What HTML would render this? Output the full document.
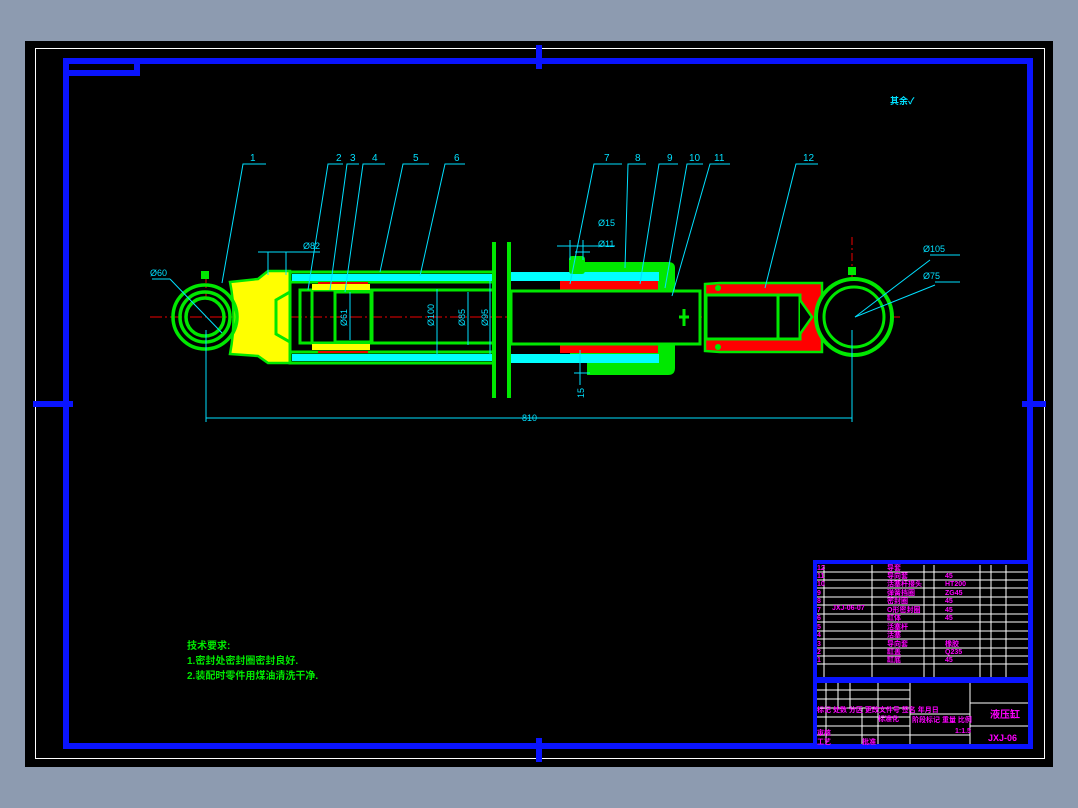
<!DOCTYPE html>
<html><head><meta charset="utf-8"><style>
html,body{margin:0;padding:0;background:#8d9bb0;width:1078px;height:808px;overflow:hidden}
svg{display:block}
text{font-family:"Liberation Sans","Noto Sans CJK SC",sans-serif}
</style></head><body>
<svg width="1078" height="808" viewBox="0 0 1078 808" xmlns="http://www.w3.org/2000/svg">
<rect x="0" y="0" width="1078" height="808" fill="#8d9bb0"/>
<rect x="25" y="41" width="1028" height="726" fill="#000"/>
<rect x="35.5" y="48.5" width="1009" height="710" fill="none" stroke="#fff" stroke-width="1"/>
<g stroke="#0a14ff" fill="none" stroke-width="6">
<rect x="66" y="61" width="964" height="685"/>
<polyline points="66,73 137,73 137,61"/>
</g>
<g fill="#0a14ff">
<rect x="536" y="45" width="6" height="24"/><rect x="536" y="738" width="6" height="24"/>
<rect x="33" y="401" width="40" height="6"/><rect x="1022" y="401" width="24" height="6"/>
</g>
<text x="890" y="104" fill="#00e0ff" font-size="9" font-weight="bold">其余✓</text>

<line x1="150" y1="317" x2="900" y2="317" stroke="#e00" stroke-width="1" stroke-dasharray="12,3,2,3"/>
<line x1="206" y1="275" x2="206" y2="300" stroke="#e00" stroke-dasharray="8,3,2,3"/>
<line x1="852" y1="237" x2="852" y2="280" stroke="#e00" stroke-dasharray="8,3,2,3"/>

<path d="M230,282 L258,279 L268,271 L290,271 L290,363 L268,363 L258,356 L230,354 Q237,317 230,282 Z" fill="#ffff00" stroke="#00e800" stroke-width="2.5"/>
<g fill="none" stroke="#00e800" stroke-width="3.5">
<circle cx="205" cy="317" r="32"/><circle cx="205" cy="317" r="25"/><circle cx="205" cy="317" r="19"/>
</g>
<rect x="201" y="271" width="8" height="8" fill="#00e800"/>
<g fill="none" stroke="#00e800" stroke-width="3">
<rect x="290" y="272" width="204" height="91"/>
<line x1="372" y1="290" x2="494" y2="290"/><line x1="372" y1="343" x2="494" y2="343"/>
<line x1="290" y1="282" x2="494" y2="282"/><line x1="290" y1="352" x2="494" y2="352"/>
<rect x="300" y="290" width="72" height="53"/>
<rect x="335" y="292" width="36" height="50"/>
<line x1="312" y1="290" x2="312" y2="343"/>
<path d="M276,300 L290,292 L290,342 L276,334 Z"/>
</g>
<rect x="292" y="274" width="200" height="7" fill="#00ffff"/>
<rect x="292" y="354" width="200" height="7" fill="#00ffff"/>
<rect x="312" y="284" width="58" height="6" fill="#ffff00"/>
<rect x="312" y="344" width="58" height="6" fill="#ffff00"/>
<rect x="318" y="282" width="50" height="2" fill="#e00"/><rect x="318" y="351" width="50" height="2" fill="#e00"/>
<rect x="492" y="242" width="4" height="156" fill="#00e800"/>
<rect x="507" y="242" width="4" height="156" fill="#00e800"/>
<path d="M570,262 L668,262 Q675,262 675,268 L675,368 Q675,375 668,375 L587,375 L587,354 L570,354 Z" fill="#00e800"/>
<rect x="511" y="272" width="148" height="9" fill="#00ffff"/>
<rect x="511" y="354" width="148" height="9" fill="#00ffff"/>
<rect x="560" y="281" width="98" height="9" fill="#ff0000"/>
<rect x="560" y="344" width="98" height="9" fill="#ff0000"/>
<rect x="569" y="256" width="16" height="18" rx="3" fill="#00e800"/>
<rect x="511" y="291" width="189" height="53" fill="#000" stroke="#00e800" stroke-width="3"/>
<path d="M684,309 L684,326 M679,317 L689,317" stroke="#00e800" stroke-width="3"/>
<path d="M705,284 L720,283 L822,283 L822,352 L720,352 L705,351 Z" fill="#ff0000" stroke="#00e800" stroke-width="2.5"/>
<rect x="706" y="295" width="72" height="44" fill="#000" stroke="#00e800" stroke-width="3"/>
<rect x="778" y="295" width="22" height="44" fill="#000" stroke="#00e800" stroke-width="3"/>
<path d="M800,300 L812,317 L800,334" fill="#000" stroke="#00e800" stroke-width="2.5"/>
<circle cx="718" cy="288" r="3" fill="#00e800"/><circle cx="718" cy="347" r="3" fill="#00e800"/>
<circle cx="854" cy="317" r="38" fill="#000" stroke="#00e800" stroke-width="4"/>
<circle cx="854" cy="317" r="30" fill="none" stroke="#00e800" stroke-width="3"/>
<rect x="848" y="267" width="8" height="8" fill="#00e800"/>

<g stroke="#00e0ff" stroke-width="1" fill="none">
<line x1="206" y1="330" x2="206" y2="422"/><line x1="852" y1="330" x2="852" y2="422"/>
<line x1="206" y1="418" x2="852" y2="418"/>
<line x1="152" y1="279" x2="170" y2="279"/><line x1="170" y1="279" x2="222" y2="333"/>
<line x1="855" y1="317" x2="930" y2="260"/><line x1="855" y1="317" x2="935" y2="285"/>
<line x1="930" y1="255" x2="960" y2="255"/><line x1="935" y1="282" x2="960" y2="282"/>
<line x1="258" y1="252" x2="320" y2="252"/><line x1="268" y1="252" x2="268" y2="275"/><line x1="286" y1="252" x2="286" y2="275"/>
<line x1="437" y1="289" x2="437" y2="355"/><line x1="468" y1="292" x2="468" y2="345"/><line x1="490" y1="281" x2="490" y2="355"/>
<line x1="350" y1="292" x2="350" y2="340"/>
<line x1="557" y1="246" x2="615" y2="246"/><line x1="570" y1="240" x2="570" y2="260"/><line x1="583" y1="240" x2="583" y2="260"/>
<line x1="575" y1="252" x2="590" y2="252"/>
<line x1="580" y1="350" x2="580" y2="385"/><line x1="574" y1="373" x2="590" y2="373"/>
<polyline points="266,164 243,164 222,283"/>
<polyline points="343,164 328,164 308,290"/>
<polyline points="359,164 347,164 330,290"/>
<polyline points="385,164 363,164 345,292"/>
<polyline points="429,164 403,164 380,272"/>
<polyline points="465,164 445,164 420,276"/>
<polyline points="622,164 594,164 570,284"/>
<polyline points="646,164 628,164 625,268"/>
<polyline points="678,164 659,164 640,284"/>
<polyline points="703,164 687,164 665,288"/>
<polyline points="730,164 710,164 672,296"/>
<polyline points="818,164 796,164 765,288"/>
</g>
<g fill="#00e0ff" font-size="10">
<text x="250" y="161">1</text><text x="336" y="161">2</text><text x="350" y="161">3</text><text x="372" y="161">4</text>
<text x="413" y="161">5</text><text x="454" y="161">6</text><text x="604" y="161">7</text><text x="635" y="161">8</text>
<text x="667" y="161">9</text><text x="689" y="161">10</text><text x="714" y="161">11</text><text x="803" y="161">12</text>
<text x="150" y="276" font-size="9">Ø60</text><text x="303" y="249" font-size="9">Ø82</text>
<text x="598" y="226" font-size="9">Ø15</text><text x="598" y="247" font-size="9">Ø11</text>
<text x="923" y="252" font-size="9">Ø105</text><text x="923" y="279" font-size="9">Ø75</text>
<text x="522" y="421" font-size="9">810</text>
<text x="0" y="0" font-size="9" transform="translate(434,326) rotate(-90)">Ø100</text>
<text x="0" y="0" font-size="9" transform="translate(465,326) rotate(-90)">Ø85</text>
<text x="0" y="0" font-size="9" transform="translate(488,326) rotate(-90)">Ø95</text>
<text x="0" y="0" font-size="9" transform="translate(347,326) rotate(-90)">Ø61</text>
<text x="0" y="0" font-size="9" transform="translate(584,398) rotate(-90)">15</text>
</g>

<g fill="#00e800" font-size="10" font-weight="bold">
<text x="187" y="649">技术要求:</text>
<text x="187" y="664">1.密封处密封圈密封良好.</text>
<text x="187" y="679">2.装配时零件用煤油清洗干净.</text>
</g>

<rect x="815" y="562" width="215" height="184" fill="#000" stroke="#0a14ff" stroke-width="4"/>
<rect x="815" y="677" width="215" height="6" fill="#0a14ff"/>
<g stroke="#fff" stroke-width="1">
<line x1="824" y1="565" x2="824" y2="677"/><line x1="872" y1="565" x2="872" y2="677"/><line x1="924" y1="565" x2="924" y2="677"/><line x1="934" y1="565" x2="934" y2="677"/>
<line x1="980" y1="565" x2="980" y2="677"/><line x1="991" y1="565" x2="991" y2="677"/><line x1="1006" y1="565" x2="1006" y2="677"/>
<line x1="817" y1="572" x2="1028" y2="572"/><line x1="817" y1="580" x2="1028" y2="580"/><line x1="817" y1="588" x2="1028" y2="588"/>
<line x1="817" y1="597" x2="1028" y2="597"/><line x1="817" y1="605" x2="1028" y2="605"/><line x1="817" y1="614" x2="1028" y2="614"/>
<line x1="817" y1="622" x2="1028" y2="622"/><line x1="817" y1="631" x2="1028" y2="631"/><line x1="817" y1="639" x2="1028" y2="639"/>
<line x1="817" y1="648" x2="1028" y2="648"/><line x1="817" y1="656" x2="1028" y2="656"/><line x1="817" y1="664" x2="1028" y2="664"/>
<line x1="817" y1="690" x2="910" y2="690"/><line x1="817" y1="699" x2="910" y2="699"/><line x1="817" y1="708" x2="910" y2="708"/>
<line x1="817" y1="717" x2="910" y2="717"/><line x1="817" y1="726" x2="910" y2="726"/><line x1="817" y1="735" x2="910" y2="735"/>
<line x1="910" y1="683" x2="910" y2="744"/><line x1="970" y1="683" x2="970" y2="744"/>
<line x1="970" y1="703" x2="1028" y2="703"/><line x1="970" y1="726" x2="1028" y2="726"/>
<line x1="910" y1="714" x2="970" y2="714"/><line x1="910" y1="735" x2="970" y2="735"/>
<line x1="826" y1="683" x2="826" y2="744"/><line x1="838" y1="683" x2="838" y2="708"/><line x1="850" y1="683" x2="850" y2="708"/>
<line x1="862" y1="708" x2="862" y2="744"/><line x1="878" y1="683" x2="878" y2="744"/>
</g>
<g fill="#ff00ff" font-size="7" font-weight="bold">
<text x="817" y="570">12</text><text x="817" y="578">11</text><text x="817" y="586">10</text><text x="817" y="595">9</text>
<text x="817" y="603">8</text><text x="817" y="612">7</text><text x="817" y="620">6</text><text x="817" y="629">5</text>
<text x="817" y="637">4</text><text x="817" y="646">3</text><text x="817" y="654">2</text><text x="817" y="662">1</text>
<text x="887" y="570">导套</text><text x="887" y="578">导向套</text><text x="887" y="586">活塞杆接头</text><text x="887" y="595">弹簧挡圈</text>
<text x="887" y="603">密封圈</text><text x="887" y="612">O形密封圈</text><text x="887" y="620">缸体</text><text x="887" y="629">活塞杆</text>
<text x="887" y="637">活塞</text><text x="887" y="646">导向套</text><text x="887" y="654">缸盖</text><text x="887" y="662">缸底</text>
<text x="945" y="578">45</text><text x="945" y="586">HT200</text><text x="945" y="595">ZG45</text><text x="945" y="603">45</text>
<text x="945" y="612">45</text><text x="945" y="620">45</text><text x="945" y="646">橡胶</text><text x="945" y="654">Q235</text><text x="945" y="662">45</text>
<text x="832" y="610">JXJ-06-07</text>
<text x="817" y="712">标记 处数 分区 更改文件号 签名 年月日</text>
<text x="878" y="721">标准化</text><text x="912" y="722">阶段标记 重量 比例</text><text x="955" y="733">1:1.5</text>
<text x="817" y="735">审核</text><text x="817" y="744">工艺</text><text x="862" y="744">批准</text>
<text x="990" y="718" font-size="10">液压缸</text><text x="988" y="741" font-size="9">JXJ-06</text>
</g>
</svg>
</body></html>
